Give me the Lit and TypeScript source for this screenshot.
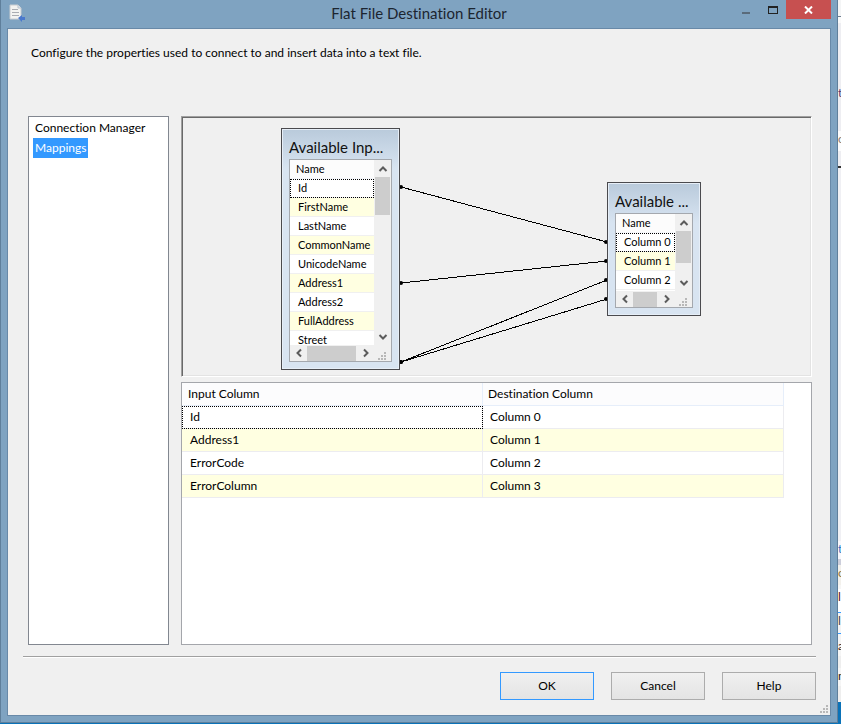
import {LitElement, html, svg, css, nothing} from "lit";
import {customElement, property} from "lit/decorators.js";
import {classMap} from "lit/directives/class-map.js";
import {styleMap} from "lit/directives/style-map.js";

const grip = html`<svg class="grip" width="9" height="9" viewBox="0 0 9 9" fill="#b8b8b8" aria-hidden="true">
  <path d="M6 0h2v2h-2zM3 3h2v2h-2zM6 3h2v2h-2zM0 6h2v2h-2zM3 6h2v2h-2zM6 6h2v2h-2z"/>
</svg>`;

const chevron = (d: string) => html`<svg width="10" height="10" viewBox="0 0 10 10" fill="none" stroke="#5c5c5c" stroke-width="2" aria-hidden="true"><path d=${d}/></svg>`;
const UP = "M1.500 7L5 3.500L8.500 7";
const DOWN = "M1.500 3L5 6.500L8.500 3";
const LEFT = "M7 1.500L3.500 5L7 8.500";
const RIGHT = "M3 1.500L6.500 5L3 8.500";

/** Column list window placed on the mapping canvas. */
@customElement("column-list")
class ColumnList extends LitElement {
  @property() heading = "";
  @property({type: Array}) rows: string[] = [];
  @property({type: Number}) vthumb = 32;
  @property({type: Number}) hthumb = 24;

  static styles = css`
    :host {
      display: flex;
      flex-direction: column;
      box-sizing: border-box;
      padding: 0 6px 6px;
      border: 1px solid #4a4a4e;
      box-shadow: inset 0 0 0 1px #e6eef7;
      background: linear-gradient(#b9cadb, #d8e4f1 40px);
    }
    h2 {
      margin: 0;
      padding: 4px 0 0 1px;
      height: 26px;
      font: 15px/28px Lato, "Open Sans", sans-serif;
      color: #111;
      white-space: nowrap;
    }
    .box {
      flex: 1;
      min-height: 0;
      display: grid;
      grid-template: minmax(0, 1fr) 16px / minmax(0, 1fr) 17px;
      margin: 0 1px 1px;
      border: 1px solid #a4a8ae;
      background: #f0f0f0;
    }
    .view { overflow: hidden; background: #fff; }
    table {
      width: 100%;
      border-collapse: separate;
      border-spacing: 0;
      font: 11px/18px Lato, "Open Sans", sans-serif;
      font-variant-ligatures: none;
      color: #000;
      white-space: nowrap;
    }
    th {
      padding: 0 6px;
      height: 18px;
      border-bottom: 1px solid #f4f6fa;
      font-weight: normal;
      text-align: left;
      background: #fcfcfc;
    }
    td {
      padding: 0 0 0 8px;
      height: 18px;
      border-bottom: 1px solid #f0f0f0;
      background: #fff;
    }
    tr:nth-child(even) td { background: #ffffe1; }
    td.focus { outline: 1px dotted #000; outline-offset: -1px; }
    .vbar, .hbar { display: flex; align-items: center; }
    .vbar { flex-direction: column; }
    button {
      flex: none;
      display: grid;
      place-items: center;
      width: 17px;
      height: 17px;
      padding: 0;
      border: 0;
      background: none;
    }
    .thumb { background: #cdcdcd; }
    .vbar .thumb { width: 15px; }
    .hbar .thumb { height: 15px; }
    .space { flex: 1; }
    .corner { display: grid; place-items: end center; }
  `;

  render() {
    return html`
      <h2>${this.heading}</h2>
      <div class="box">
        <div class="view">
          <table>
            <thead><tr><th>Name</th></tr></thead>
            <tbody>${this.rows.map((r, i) => html`<tr><td class=${classMap({focus: i === 0})}>${r}</td></tr>`)}</tbody>
          </table>
        </div>
        <div class="vbar">
          <button aria-label="Scroll up">${chevron(UP)}</button>
          <div class="thumb" style=${styleMap({height: this.vthumb + "px"})}></div>
          <div class="space"></div>
          <button aria-label="Scroll down">${chevron(DOWN)}</button>
        </div>
        <div class="hbar">
          <button aria-label="Scroll left">${chevron(LEFT)}</button>
          <div class="thumb" style=${styleMap({width: this.hthumb + "px"})}></div>
          <div class="space"></div>
          <button aria-label="Scroll right">${chevron(RIGHT)}</button>
        </div>
        <div class="corner">${grip}</div>
      </div>`;
  }
}

const INPUTS = ["Id", "FirstName", "LastName", "CommonName", "UnicodeName", "Address1", "Address2", "FullAddress", "Street"];
const OUTPUTS = ["Column 0", "Column 1", "Column 2"];
const MAPPINGS = [["Id", "Column 0"], ["Address1", "Column 1"], ["ErrorCode", "Column 2"], ["ErrorColumn", "Column 3"]];
// Each link runs from the right edge of the input list to the left edge of the output list.
const LINKS = [[219, 70, 425, 125], [219, 166, 425, 144], [219, 245, 425, 163], [219, 245, 425, 182]];

interface Slice { h: number; bg: string; text?: string; color?: string; }
// Edge of the application window that lies behind the dialog.
const BEHIND: Slice[] = [
  {h: 16, bg: "#f4f5f6"}, {h: 1, bg: "#6f7e90"}, {h: 6, bg: "#fafafa"}, {h: 62, bg: "#eeeef2"},
  {h: 16, bg: "#eeeef2", text: "t", color: "#5a3a6a"}, {h: 30, bg: "#eeeef2"},
  {h: 20, bg: "#fdfdfd", text: "c", color: "#8a7a70"}, {h: 15, bg: "#eeeef2"}, {h: 2, bg: "#333"}, {h: 373, bg: "#f0f0f4"},
  {h: 16, bg: "#f8f8fc", text: "t", color: "#2f6fc0"}, {h: 2, bg: "#f8f8fc"}, {h: 6, bg: "#cccedb"},
  {h: 20, bg: "#f3f1ec", text: "o", color: "#8a7440"}, {h: 4, bg: "#f6f6f6"},
  {h: 18, bg: "#fff", text: "l", color: "#5a1010"}, {h: 5, bg: "#fff"}, {h: 1, bg: "#3399ff"},
  {h: 18, bg: "#f5f5f5", text: "l", color: "#444"}, {h: 2, bg: "#f5f5f5"}, {h: 1, bg: "#3399ff"}, {h: 4, bg: "#f5f5f5"},
  {h: 18, bg: "#f5f5f5", text: "a", color: "#3a2010"}, {h: 12, bg: "#eeeeee"},
  {h: 18, bg: "#f5f5f5", text: "m", color: "#2a1a10"}, {h: 16, bg: "#eeeeee"},
];

@customElement("app-root")
class AppRoot extends LitElement {
  static styles = css`
    :host {
      display: flex;
      box-sizing: border-box;
      min-height: 100vh;
      font: 12px/16px Lato, "Open Sans", sans-serif;
      font-variant-ligatures: none;
      color: #000;
      background: #0a72b8;
    }
    .window {
      flex: 1;
      min-width: 0;
      display: flex;
      flex-direction: column;
      margin-bottom: 1px;
      padding: 0 6px 6px;
      border: solid #5f7f9b;
      border-width: 0 1px 1px;
      background: #7fa3c1;
    }
    .behind { flex: none; width: 3px; overflow: hidden; }
    .slice { overflow: hidden; }
    .titlebar {
      display: grid;
      grid-template-columns: 1fr auto 1fr;
      height: 28px;
    }
    .app-icon { margin: 4px 0 0 2px; }
    h1 {
      margin: 0;
      font-size: 15px;
      line-height: 26px;
      font-weight: normal;
      color: #1c2530;
    }
    .controls { display: flex; justify-content: flex-end; }
    .controls button {
      display: grid;
      place-items: center;
      width: 27px;
      height: 19px;
      padding: 0;
      border: 0;
      background: none;
    }
    .controls .close { width: 45px; background: #c75050; }
    .client {
      flex: 1;
      display: flex;
      flex-direction: column;
      border: 1px solid #6889a8;
      background: #f0f0f0;
    }
    .intro { margin: 16px 23px 55px; }
    .body {
      flex: 1;
      display: flex;
      gap: 12px;
      margin: 0 18px 0 20px;
    }
    nav {
      flex: none;
      box-sizing: border-box;
      width: 141px;
      padding: 1px 4px;
      border: 1px solid #828790;
      background: #fff;
    }
    nav a {
      display: block;
      width: fit-content;
      padding: 0 2px;
      line-height: 20px;
      color: #000;
      text-decoration: none;
    }
    nav a.current { color: #fff; background: #3399ff; }
    .main {
      flex: 1;
      min-width: 0;
      display: flex;
      flex-direction: column;
      gap: 5px;
    }
    .canvas {
      position: relative;
      height: 257px;
      overflow: hidden;
      border: 1px solid;
      border-color: #a0a0a0 #fff #fff #a0a0a0;
      padding: 1px;
      box-shadow: inset 1px 1px #696969, inset -1px -1px #e3e3e3;
    }
    .links { position: absolute; inset: 0; width: 100%; height: 100%; }
    column-list { position: absolute; }
    .inputs { left: 99px; top: 11px; width: 119px; height: 242px; }
    .outputs { left: 425px; top: 65px; width: 94px; height: 134px; }
    .grid {
      flex: 1;
      border: 1px solid #a4a6ab;
      background: #fff;
    }
    .grid table {
      width: 602px;
      max-width: 100%;
      table-layout: fixed;
      border-collapse: separate;
      border-spacing: 0;
    }
    .grid th {
      height: 22px;
      padding: 0 6px;
      border: solid #e6eefa;
      border-width: 0 1px 1px 0;
      font-weight: normal;
      text-align: left;
      background: #fcfcfd;
    }
    .grid td {
      height: 22px;
      padding: 0 8px;
      border: solid #ececf0;
      border-width: 0 1px 1px 0;
    }
    .grid th + th { padding-left: 5px; }
    .grid td + td { padding-left: 7px; }
    .grid tr:nth-child(even) td { background: #ffffe1; }
    .grid td.focus { outline: 1px dotted #000; outline-offset: -1px; }
    hr {
      width: auto;
      margin: 11px 14px 0 15px;
      border: solid;
      border-width: 1px 0;
      border-color: #a0a0a0 #a0a0a0 #fff;
    }
    footer {
      position: relative;
      display: flex;
      justify-content: flex-end;
      gap: 17px;
      padding: 14px 14px 15px;
    }
    footer button {
      width: 94px;
      height: 28px;
      padding: 0;
      border: 1px solid #acacac;
      font: inherit;
      color: #000;
      background: linear-gradient(#f0f0f0, #e4e4e4);
    }
    footer .default { border-color: #3399ff; }
    footer .grip { position: absolute; right: 1px; bottom: 1px; }
  `;

  render() {
    return html`
      <div class="window">
        <header class="titlebar">
          <svg class="app-icon" width="17" height="18" viewBox="0 0 17 18" aria-hidden="true">
            <path d="M1 1h8l3 3v11h-11z" fill="#f3f3f1" stroke="#c9ccd0"/>
            <path d="M9 1v3h3" fill="#dfe6ee" stroke="#b9c3cf"/>
            <path d="M3 5.500h6M3 8.500h7M3 11.500h7" stroke="#a9acb2"/>
            <path d="M9 14l4-3v2h3v3h-3v2z" fill="#4a78cc"/>
          </svg>
          <h1>Flat File Destination Editor</h1>
          <div class="controls">
            <button aria-label="Minimize"><svg width="8" height="8" viewBox="0 0 8 8"><path d="M0 6h8v2h-8z" fill="#5a6b7b"/></svg></button>
            <button aria-label="Maximize"><svg width="10" height="8" viewBox="0 0 10 8"><path d="M0 0h10v8h-10zM1 2v5h8v-5z" fill="#222" fill-rule="evenodd"/></svg></button>
            <button class="close" aria-label="Close"><svg width="9" height="8" viewBox="0 0 9 8"><path d="M1 .5L8 7.500M8 .5L1 7.500" stroke="#fff" stroke-width="2"/></svg></button>
          </div>
        </header>
        <div class="client">
          <p class="intro">Configure the properties used to connect to and insert data into a text file.</p>
          <div class="body">
            <nav>
              <a href="#connection">Connection Manager</a>
              <a href="#mappings" class="current" aria-current="page">Mappings</a>
            </nav>
            <div class="main">
              <div class="canvas">
                <svg class="links" aria-hidden="true">
                  ${LINKS.map(([x1, y1, x2, y2]) => svg`
                    <line x1=${x1} y1=${y1} x2=${x2} y2=${y2} stroke="#000" shape-rendering="crispEdges"/>
                    <circle cx=${x1} cy=${y1} r="2"/><circle cx=${x2 - 1} cy=${y2} r="2"/>`)}
                </svg>
                <column-list class="inputs" heading="Available Inp..." .rows=${INPUTS} .vthumb=${38} .hthumb=${49}></column-list>
                <column-list class="outputs" heading="Available ..." .rows=${OUTPUTS} .vthumb=${32} .hthumb=${24}></column-list>
              </div>
              <div class="grid">
                <table>
                  <thead><tr><th>Input Column</th><th>Destination Column</th></tr></thead>
                  <tbody>${MAPPINGS.map(([a, b], i) => html`<tr><td class=${classMap({focus: i === 0})}>${a}</td><td>${b}</td></tr>`)}</tbody>
                </table>
              </div>
            </div>
          </div>
          <hr>
          <footer>
            <button class="default">OK</button>
            <button>Cancel</button>
            <button>Help</button>
            ${grip}
          </footer>
        </div>
      </div>
      <div class="behind" aria-hidden="true">
        ${BEHIND.map(s => html`<div class="slice" style=${styleMap({height: s.h + "px", background: s.bg, color: s.color ?? "inherit"})}>${s.text ?? nothing}</div>`)}
      </div>`;
  }
}
